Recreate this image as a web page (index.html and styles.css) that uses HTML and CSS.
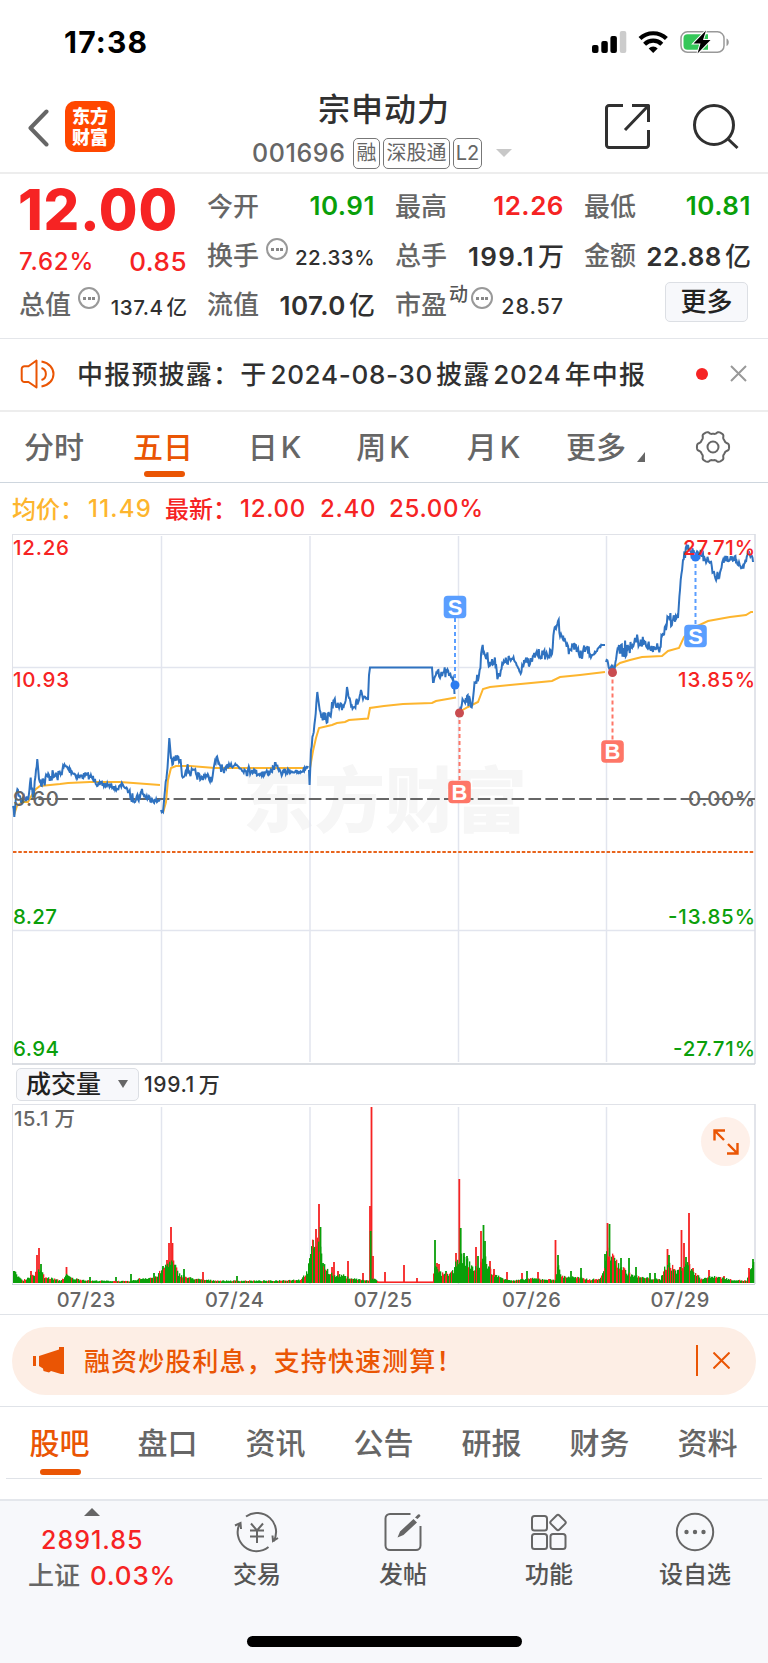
FILE: index.html
```html
<!DOCTYPE html>
<html lang="zh-CN">
<head>
  <meta charset="UTF-8">
  <title>宗申动力 001696</title>
  <meta name="viewport" content="width=device-width, initial-scale=1.0">
  <link rel="stylesheet" href="styles.css">
</head>
<body>
  <!-- STATUS BAR -->
  <div class="status">
    <span class="clock">17:38</span>
    <svg class="status-icons" width="140" height="26" viewBox="0 0 140 26">
      <rect x="0" y="14" width="6.5" height="8" rx="2"/>
      <rect x="9.3" y="10" width="6.5" height="12" rx="2"/>
      <rect x="18.4" y="5" width="6.5" height="17" rx="2"/>
      <rect x="27.8" y="0" width="6.5" height="22" rx="2" fill="#ccc"/>
      <g fill="none" stroke="#000" stroke-width="4.2">
        <path d="M48 7.6a19 19 0 0 1 26.4 0"/>
        <path d="M52.6 13.2a12.3 12.3 0 0 1 17.2 0"/>
      </g>
      <path d="M61.2 22l-4.5-4.6a6.5 6.5 0 0 1 9 0z"/>
      <rect x="89" y=".8" width="43" height="20.5" rx="6.5" fill="#fff" stroke="#999" stroke-width="1.5"/>
      <path d="M95.5 3.3h20.5v15.5H95.5a4 4 0 0 1-4-4V7.3a4 4 0 0 1 4-4z" fill="#34c759"/>
      <path d="M134.5 7.5c3 1 3 6.5 0 7.5z" fill="#999"/>
      <path d="M114-.5L101.5 12.5h7l-3 10L118.5 9h-7.5z" stroke="#fff" stroke-width="2" paint-order="stroke"/>
    </svg>
  </div>

  <!-- HEADER -->
  <header class="header">
    <svg class="back" width="22" height="38" viewBox="0 0 22 38"><path d="M18.5 2.5L2.5 19l16 16.5"/></svg>
    <div class="logo"><span>东方</span><span>财富</span></div>
    <div class="title">
      <h1>宗申动力</h1>
      <div class="code">
        <span class="num">001696</span>
        <span class="badge b1">融</span>
        <span class="badge b2">深股通</span>
        <span class="badge b3">L2</span>
        <i class="caret"></i>
      </div>
    </div>
    <svg class="share" width="48" height="48" viewBox="0 0 48 48"><path d="M19 2.5H5a2.5 2.5 0 0 0-2.5 2.5v37A2.5 2.5 0 0 0 5 44.5h37a2.5 2.5 0 0 0 2.5-2.5V27M28 2.5h16.5V19M44 3L21 27"/></svg>
    <svg class="search" width="48" height="48" viewBox="0 0 48 48"><circle cx="22" cy="22" r="19.5"/><path d="M35.5 35.5L45.5 45"/></svg>
  </header>

  <!-- QUOTE -->
  <section class="quote">
    <div class="cell price red">12.00</div>
    <div class="cell"><label>今开</label><b class="green">10.91</b></div>
    <div class="cell"><label>最高</label><b class="red">12.26</b></div>
    <div class="cell"><label>最低</label><b class="green">10.81</b></div>

    <div class="cell change red"><span class="pct">7.62%</span><span class="diff">0.85</span></div>
    <div class="cell"><label>换手</label><i class="more-dot"></i><b class="small">22.33%</b></div>
    <div class="cell"><label>总手</label><b class="wide">199.1<em>万</em></b></div>
    <div class="cell"><label>金额</label><b>22.88<em>亿</em></b></div>

    <div class="cell"><label>总值</label><i class="more-dot"></i><b class="small">137.4<em>亿</em></b></div>
    <div class="cell"><label>流值</label><b>107.0<em>亿</em></b></div>
    <div class="cell"><label>市盈</label><sup>动</sup><i class="more-dot tight"></i><b class="small pe">28.57</b></div>
    <div class="cell"><button class="more">更多</button></div>
  </section>

  <!-- NOTICE -->
  <div class="notice">
    <svg width="36" height="32" viewBox="0 0 36 32"><path d="M16.5 2.5v27L8.5 24h-4A2.8 2.8 0 0 1 1.7 21V11a2.8 2.8 0 0 1 2.8-2.8h4zM21.5 10a6.3 6.3 0 0 1 0 12M21.5 3.5c16 3 16 22 0 25"/></svg>
    <span class="notice-text">中报预披露：于<span class="n1">2024-08-30</span>披露<span class="n2">2024</span>年中报</span>
    <i class="dot"></i>
    <svg class="close" width="17" height="17" viewBox="0 0 17 17"><path d="M1 1l15 15M16 1L1 16"/></svg>
  </div>

  <!-- PERIOD TABS -->
  <nav class="periods">
    <a>分时</a>
    <a class="active">五日</a>
    <a>日<span>K</span></a>
    <a>周<span>K</span></a>
    <a>月<span>K</span></a>
    <a class="last">更多<i></i></a>
    <svg width="36" height="36" viewBox="-18 -18 36 36"><path id="gear"/><circle r="5.5"/></svg>
  </nav>

  <!-- CHART -->
  <div class="legend">
    <span class="avg cn">均价：</span><span class="avg l1">11.49</span>
    <span class="red cn">最新：</span><span class="red l3">12.00</span><span class="red l4">2.40</span><span class="red l5">25.00%</span>
  </div>
  <svg class="chart" id="priceChart" width="768" height="532" viewBox="0 533 768 532"></svg>

  <div class="vol-head">
    <button>成交量<i></i></button>
    <span>199.1<em>万</em></span>
  </div>
  <div class="volume">
    <svg class="chart" id="volumeChart" width="768" height="182" viewBox="0 1103 768 182"></svg>
    <div class="expand">
      <svg width="26" height="26" viewBox="0 0 26 26"><path d="M1.5 11.5V1.5H12M2 2l9 9M24.5 14v10.5H14M24 24l-9-9"/></svg>
    </div>
  </div>
  <div class="dates">
    <span>07/23</span><span>07/24</span><span>07/25</span><span>07/26</span><span>07/29</span>
  </div>

  <!-- BANNER -->
  <div class="banner-wrap">
    <div class="banner">
      <svg width="32" height="28" viewBox="0 0 32 28"><path d="M0 9h3v10H0zM6 9l20-6.5V0h5v27h-3l-10-3-2 1.5-5.5-1.5-.5-2.5L6 19z"/></svg>
      <span>融资炒股利息，支持快速测算！</span>
      <i></i>
      <svg class="close" width="17" height="17" viewBox="0 0 17 17"><path d="M.5 .5l16 16M16.5 .5l-16 16"/></svg>
    </div>
  </div>

  <!-- SECTIONS -->
  <nav class="sections">
    <a class="active">股吧</a><a>盘口</a><a>资讯</a><a>公告</a><a>研报</a><a>财务</a><a>资料</a>
  </nav>

  <!-- BOTTOM BAR -->
  <footer class="bottom">
    <div class="index">
      <i></i>
      <div class="value red">2891.85</div>
      <div class="name">上证 <span class="red">0.03%</span></div>
    </div>
    <a>
      <svg width="46" height="42" viewBox="-23 -21 46 42">
        <path d="M-11-15.5A19 19 0 0 1 16.5 9.5M11.5 15A19 19 0 0 1-17-9M-22-6.5l5.5-2.5.5 6M21 6l-5 3-.5-5.5"/>
        <path d="M-6-8.5l6 7 6-7M0-1.5V11M-7-1.5H7M-7 4.5H7"/>
      </svg>
      交易
    </a>
    <a>
      <svg width="42" height="42" viewBox="-21 -21 42 42">
        <path d="M7.5-18H-13a4.5 4.5 0 0 0-4.5 4.5v27a4.5 4.5 0 0 0 4.5 4.5h26a4.5 4.5 0 0 0 4.5-4.5V-6"/>
        <path class="solid" d="M-5.5 5.5l2.5-6L10.5-13l3.5 3.5L.5 3zM12-14.5l3-3q2-1 2.5 1.5l-3 3z"/>
      </svg>
      发帖
    </a>
    <a>
      <svg width="42" height="42" viewBox="-21 -21 42 42">
        <rect x="-17" y="-16" width="15" height="14.5" rx="2.5"/>
        <rect x="-17" y="2" width="15" height="15" rx="2.5"/>
        <rect x="1.5" y="2" width="15" height="15" rx="2.5"/>
        <rect x="3" y="-15.5" width="12" height="12" rx="2" transform="rotate(45 9 -9.5)"/>
      </svg>
      功能
    </a>
    <a>
      <svg width="42" height="42" viewBox="-21 -21 42 42">
        <circle r="18.2"/>
        <g class="solid"><circle cx="-8.5" r="2.2"/><circle r="2.2"/><circle cx="8.5" r="2.2"/></g>
      </svg>
      设自选
    </a>
    <div class="home-bar"></div>
  </footer>

  <script src="chart.js"></script>
</body>
</html>
```
FILE: styles.css
```css
* {
  box-sizing: border-box;
}
body {
  margin: 0;
  width: 768px;
  height: 1663px;
  overflow: hidden;
  background: #fff;
  color: #303030;
  font-family: Inter, "Noto Sans CJK SC", sans-serif;
  font-weight: 500;
  display: flex;
  flex-direction: column;
}
body > * {
  flex-shrink: 0;
}
svg {
  display: block;
  flex-shrink: 0;
}
i, em {
  font-style: normal;
}
.red {
  color: #f62323;
}
.green {
  color: #0a9f0a;
}

/* status bar */
.status {
  height: 84px;
  padding: 0 36px 0 64px;
  display: flex;
  align-items: center;
  justify-content: space-between;
}
.clock {
  font-size: 30px;
  font-weight: 700;
  letter-spacing: 1.2px;
  color: #000;
}
.status-icons {
  width: 140px;
  margin-top: 4px;
  overflow: visible;
}

/* header */
.header {
  height: 90px;
  border-bottom: 2px solid #ededed;
  display: flex;
  align-items: flex-start;
}
.header svg {
  fill: none;
  stroke: #303030;
  stroke-width: 3;
  stroke-linejoin: round;
}
.header .back {
  margin: 25px 0 0 28px;
  stroke: #666;
  stroke-width: 4;
  stroke-linecap: round;
}
.logo {
  width: 50px;
  height: 51px;
  margin: 17px 0 0 15px;
  padding-top: 5px;
  border-radius: 10px;
  background: #ff4700;
  color: #fff;
  font-size: 18px;
  font-weight: 900;
  line-height: 21px;
  text-align: center;
}
.logo span {
  display: block;
}
.title {
  width: 262px;
  margin-left: 137px;
}
.title h1 {
  margin: 1px 0 0 66px;
  font-size: 32px;
  font-weight: 500;
  line-height: 50px;
  letter-spacing: 1px;
}
.code {
  height: 34px;
  margin-top: 1px;
  display: flex;
  align-items: center;
  color: #666;
}
.code .num {
  width: 101px;
  font-size: 25px;
  letter-spacing: .6px;
}
.badge {
  height: 31px;
  border: 1.5px solid #777;
  border-radius: 5px;
  font-size: 20px;
  font-weight: 400;
  line-height: 28px;
  text-align: center;
}
.b1 { width: 27px; }
.b2 { width: 67px; margin: 0 3px; }
.b3 { width: 29px; }
.caret {
  margin-left: 14px;
  border: 8px solid transparent;
  border-top-color: #c8c8c8;
  border-bottom: 0;
}
.share {
  margin: 19px 0 0 90px;
}
.search {
  margin: 19px 0 0 40px;
}

/* quote */
.quote {
  height: 165px;
  padding: 7px 15px 0 19px;
  border-bottom: 1.5px solid #e4e6ea;
  display: grid;
  grid-template-columns: 168px 168px 169px 167px;
  grid-template-rows: 49px 49px 49px;
  column-gap: 20px;
}
.cell {
  display: flex;
  align-items: center;
}
.cell label {
  margin-top: -2px;
  font-size: 26px;
  font-weight: 500;
  color: #666;
}
.cell b {
  margin: -1px 0 0 auto;
  font-size: 26px;
  font-weight: 600;
  letter-spacing: .5px;
  white-space: nowrap;
}
.cell b.wide {
  letter-spacing: 1.3px;
}
.cell em {
  margin-left: 3px;
  font-weight: 500;
  letter-spacing: 0;
}
.cell .small {
  margin-top: 5px;
  font-size: 20.5px;
  font-weight: 500;
  letter-spacing: .5px;
}
.cell .pe {
  font-size: 21.5px;
  letter-spacing: .9px;
}
.price {
  padding-top: 8px;
  margin-left: -1px;
  font-size: 56px;
  font-weight: 800;
  letter-spacing: .8px;
}
.change {
  justify-content: space-between;
  padding-top: 14px;
}
.pct {
  font-size: 24px;
  letter-spacing: .8px;
}
.diff {
  font-size: 26px;
  letter-spacing: .5px;
}
.more-dot {
  width: 22px;
  height: 22px;
  margin: -11px 0 0 7px;
  border: 2px solid #999;
  border-radius: 50%;
  background:
    radial-gradient(circle, #888 1.6px, transparent 2px) center / 5px 5px no-repeat,
    radial-gradient(circle, #888 1.6px, transparent 2px) 2px center / 5px 5px no-repeat,
    radial-gradient(circle, #888 1.6px, transparent 2px) 11px center / 5px 5px no-repeat;
}
.more-dot.tight {
  margin-left: 3px;
}
.cell sup {
  margin: -17px 0 0 2px;
  font-size: 19px;
  line-height: 20px;
  color: #555;
}
.more {
  width: 83px;
  height: 40px;
  margin: -3px 3px 0 auto;
  padding: 0;
  border: 1.5px solid #dcdfe4;
  border-radius: 5px;
  background: #f7f8fb;
  color: #222;
  font: inherit;
  font-size: 26px;
  line-height: 38px;
}

/* notice */
.notice {
  height: 73px;
  padding-left: 20px;
  border-bottom: 2px solid #ededed;
  display: flex;
  align-items: center;
}
.notice svg {
  margin-top: -2px;
  fill: none;
  stroke: #ea5504;
  stroke-width: 2;
  stroke-linejoin: round;
}
.notice-text {
  width: 600px;
  margin: -5px 0 0 21px;
  font-size: 26px;
  letter-spacing: 1.2px;
  white-space: nowrap;
}
.n1, .n2 {
  margin: 0 3px;
  letter-spacing: .7px;
}
.dot {
  width: 12px;
  height: 12px;
  margin: -2px 0 0 19px;
  border-radius: 50%;
  background: #f62323;
}
.notice .close {
  margin-left: 22px;
  stroke: #999;
}

/* period tabs */
.periods {
  height: 71px;
  border-bottom: 1.5px solid #ced6de;
  display: grid;
  grid-template-columns: 108px 110px 113px 104px 117px 143px 36px;
  align-items: center;
}
.periods a {
  position: relative;
  font-size: 30px;
  line-height: 68px;
  color: #666;
  text-align: center;
  white-space: nowrap;
}
.periods a span {
  margin-left: 3px;
}
.periods a.last {
  padding-left: 14px;
  text-align: left;
}
.periods .last i {
  display: inline-block;
  margin-left: 11px;
  border-left: 8px solid transparent;
  border-bottom: 10px solid #666;
  vertical-align: -4px;
}
.periods svg {
  fill: none;
  stroke: #666;
  stroke-width: 2;
}
.periods a.active, .sections a.active {
  color: #ea5504;
}
.active::after {
  content: "";
  position: absolute;
  left: 50%;
  bottom: 4px;
  width: 41px;
  height: 6px;
  margin-left: -19px;
  border-radius: 3px;
  background: #ea5504;
}

/* chart */
.legend {
  height: 50px;
  padding: 1px 0 0 12px;
  display: flex;
  align-items: center;
  font-size: 24px;
  letter-spacing: .7px;
}
.legend .cn {
  margin-top: -3px;
  letter-spacing: 0;
}
.avg {
  color: #fdb52e;
}
.legend .l1 { width: 77px; margin-left: 4px; letter-spacing: 1.2px; }
.legend .l3 { width: 80px; margin-left: 3px; }
.legend .l4 { width: 69px; }
.chart text {
  font-family: Inter, "Noto Sans CJK SC", sans-serif;
  font-weight: 500;
}
.chart .mark {
  font-family: "Liberation Sans", sans-serif;
  font-weight: 700;
}
.vol-head {
  height: 38px;
  padding-left: 16px;
  display: flex;
  align-items: center;
  font-size: 21px;
}
.vol-head button {
  width: 123px;
  height: 33px;
  padding: 0 0 0 9px;
  margin-right: 5px;
  border: 1.5px solid #dcdfe4;
  border-radius: 5px;
  background: #f7f8fb;
  color: #222;
  font: inherit;
  font-size: 25px;
  line-height: 29px;
  display: flex;
  align-items: center;
}
.vol-head button i {
  margin-left: 17px;
  border: 5px solid transparent;
  border-top: 8px solid #666;
  border-bottom: 0;
}
.vol-head span {
  margin-top: -2px;
  letter-spacing: .6px;
}
.vol-head em {
  margin-left: 4px;
}
.volume {
  position: relative;
}
.expand {
  position: absolute;
  left: 701px;
  top: 14px;
  width: 49px;
  height: 49px;
  padding: 12px;
  border-radius: 50%;
  background: #fef0e9;
}
.expand svg {
  fill: none;
  stroke: #ea5504;
  stroke-width: 2.4;
}
.dates {
  height: 30px;
  padding: 0 12px;
  border-bottom: 1.5px solid #e0e3e8;
  display: grid;
  grid-template-columns: repeat(5, 148.5px);
  font-size: 20px;
  letter-spacing: .6px;
  line-height: 31px;
  color: #666;
  text-align: center;
}

/* banner */
.banner-wrap {
  height: 92px;
  padding: 12px 12px 0;
  border-bottom: 1.5px solid #e0e3e8;
}
.banner {
  height: 68px;
  padding-left: 21px;
  border-radius: 34px;
  background: #fdeee5;
  color: #ea5504;
  display: flex;
  align-items: center;
}
.banner svg {
  fill: #ea5504;
}
.banner span {
  width: 591px;
  margin: -4px 0 0 19px;
  font-size: 26px;
  letter-spacing: 1.1px;
}
.banner i {
  width: 2px;
  height: 31px;
  margin: -1px 15px 0 21px;
  background: #ea5504;
}
.banner .close {
  margin-top: -1px;
  fill: none;
  stroke: #ea5504;
  stroke-width: 2;
}

/* section tabs */
.sections {
  height: 72px;
  margin: 0 6px;
  border-bottom: 1.5px solid #e0e3e8;
  display: grid;
  grid-template-columns: repeat(7, 108px);
}
.sections a {
  position: relative;
  font-size: 30px;
  line-height: 72px;
  color: #666;
  text-align: center;
  text-indent: -1px;
}
.sections .active::after {
  bottom: 4px;
  margin-left: -20px;
}

/* bottom bar */
.bottom {
  position: relative;
  height: 164px;
  margin-top: 20px;
  border-top: 2px solid #e4e7ec;
  background: #f7f8fb;
  display: flex;
}
.index {
  width: 184px;
  padding-top: 7px;
}
.index i {
  display: block;
  width: 16px;
  margin-left: 84px;
  border: 8px solid transparent;
  border-top: 0;
  border-bottom-color: #666;
}
.value {
  padding: 6px 0 0 41px;
  font-size: 25px;
  letter-spacing: 1px;
  line-height: 36px;
}
.name {
  padding-left: 28px;
  font-size: 26px;
  line-height: 36px;
  color: #666;
}
.name span {
  margin-left: 3px;
  letter-spacing: .8px;
}
.bottom a {
  width: 146px;
  padding-top: 10px;
  display: flex;
  flex-direction: column;
  align-items: center;
  font-size: 24px;
  line-height: 43px;
  color: #555;
}
.bottom svg {
  fill: none;
  stroke: #666;
  stroke-width: 2;
}
.bottom .solid {
  fill: #666;
  stroke: none;
}
.home-bar {
  position: absolute;
  left: 247px;
  bottom: 16px;
  width: 275px;
  height: 11px;
  border-radius: 6px;
  background: #000;
}
```
FILE: chart.js
```js
// price anchors: [x, y, jitter]
var days = [
  [[13,806,2],[14.3,817,0],[16,797,3],[18,790,4],[21,802,3],[24,796,3],[28,800,3],[30,783,5],[34,793,3],[36,770,3],[37.3,759,0],[39,779,4],[44,782,4],[49,775,4],[57,777,3],[61,772,3],[65,766,2],[72,772,2],[79,777,2],[86,775,2],[95,779,3],[99,785,2],[108,785,1],[117,789,2],[123,785,1],[129,792,3],[131,798,3],[140,797,2],[142,789,2],[144,796,2],[152,799,2],[157,802,1],[160,799,0]],
  [[161,810,1],[163,812,0],[165,790,2],[167.5,768,3],[169.3,738,0],[171,758,3],[173,764,4],[177,757,3],[181,764,3],[182,776,3],[187,768,3],[191,773,3],[196,774,3],[201,779,2],[205,775,2],[212,780,1],[215,761,4],[219,763,3],[224,773,2],[229,764,2],[236,765,2],[246,771,3],[252,770,2],[259,774,2],[270,772,2],[276,765,1],[281,773,2],[290,771,1],[300,773,1],[306,768,1],[308,766,0]],
  [[309,770,1],[309.6,785,0],[311,750,2],[313,735,2],[315,720,3],[317.3,692,0],[319,705,3],[322,715,4],[326,719,3],[330,716,4],[332,702,4],[337,707,4],[342,710,3],[345,703,3],[347,687,2],[349,698,3],[354,707,3],[359,700,2],[361,690,2],[363,699,2],[368,700,1],[369,675,0],[370,667.5,0],[432,667.5,0],[433,682,3],[437,674,4],[440,678,3],[444,672,4],[449,675,2],[453,678,0],[454,685,0],[454.5,694,0]],
  [[458,717,0],[459,712,2],[463,700,4],[467,696,4],[471,707,4],[475,683,4],[479,675,4],[482,648,3],[486,656,4],[490,662,4],[496,664,4],[498,677,3],[503,664,3],[510,659,3],[516,663,2],[520,672,3],[524,660,3],[530,664,3],[536,653,3],[543,655,3],[552,654,2],[554,631,3],[558,621,4],[561,634,2],[566,643,4],[570,650,3],[576,645,3],[580,658,4],[586,648,3],[592,655,1],[597,651,1],[602,645,0],[605,645,0]],
  [[606,662,3],[608,663,5],[611,667,6],[614,673,3],[617,652,5],[619,645,6],[623,648,7],[627,645,5],[632,648,3],[635,638,4],[640,645,3],[644,640,3],[648,645,3],[653,652,4],[660,648,3],[662,636,4],[666,630,5],[669,617,5],[673,620,4],[678,618,2],[680,590,2],[683,560,3],[688,545,4],[691,552,4],[695,557,3],[700,554,4],[704,556,3],[709,562,4],[714,572,5],[718,579,2],[723,560,3],[728,561,4],[734,560,3],[739,562,2],[742,568,2],[746,562,2],[749,552,3],[753,562,0]]
];
var averages = [
  "14,815 17,806 22,802 28,802 33,793 36,789 40,786 50,785 60,784 68,783 90,782 120,782 160,785",
  "163,813 166,802 168,780 171,768 176,766 190,766 215,768 307,768",
  "310,768 313,751 316,738 319,728 332,725 337,723 345,722 349,720 368,718.5 370,708 384,706 403,704 432,703 436,701 456,697.5",
  "459,712 468,707 478,702 483,689 490,687 510,685 552,681 560,677 580,675 605,672",
  "612,669 620,663 630,660 642,657 662,656 668,651 679,648 684,637 695,627 708,621 730,617 746,615 751,612 753,612"
];

// volume envelope: [x, height], peaks: [x, height, colour]
var volume = [
  [13,10],[17,7],[22,2],[26,4],[32,7],[36,9],[40,12],[44,5],[52,4],[60,2],[66,7],[72,4],[90,2],[100,2],[130,1.5],[140,4],[155,5],[162,12],[168,18],[173,18],[178,8],[186,5],[200,3],[220,2],[240,2],[270,2],[300,3],[307,10],[312,34],[318,38],[321,22],[326,12],[334,6],[342,7],[346,5],[352,4],[368,2],[374,4],[378,1],[400,1],[432,1],[434,14],[441,8],[448,8],[453,10],[457,22],[462,22],[468,18],[474,12],[479,15],[483,25],[487,16],[492,8],[500,5],[512,2],[530,4],[550,3],[555,3],[557,16],[561,6],[575,5],[590,3],[600,4],[604,14],[607,30],[612,22],[620,15],[628,8],[640,5],[660,3],[663,12],[668,17],[676,10],[681,14],[686,18],[692,11],[700,4],[715,6],[730,3],[746,2],[749,9],[753,16]
];
var peaks = [
  [37,28,"r"],[39,35,"r"],[41,19,"g"],[31,12,"r"],[66.5,16,"r"],[90,6,"g"],[116,6,"g"],[131,9,"g"],[154,10,"g"],[163,17,"g"],[167,23,"r"],[169,40,"r"],[171,56,"r"],[172.5,40,"r"],[175,18,"g"],[184,14,"g"],[203,11,"r"],[237,7,"g"],
  [309,18,"r"],[311,28,"g"],[313,43,"g"],[316,54,"r"],[319,79,"r"],[320.5,56,"g"],[323,20,"g"],[332,16,"r"],[334,21,"r"],[338,12,"r"],[348,22,"r"],[363,10,"r"],[370,77,"r"],[371.5,176,"r"],[373,27,"r"],[370.7,52,"g"],
  [385,11,"r"],[404,18,"r"],[417,5,"r"],[435,43,"g"],[437,20,"r"],[439,19,"r"],[446,12,"g"],[456,30,"r"],[459.3,104,"r"],[460.7,55,"g"],[464,30,"g"],[467,27,"g"],[476,36,"r"],[478,27,"g"],[481,52,"r"],[483.5,58,"g"],[485,42,"g"],[490,22,"r"],[494,14,"r"],[507,11,"r"],[522,10,"r"],[527,12,"g"],[538,11,"r"],[555.5,43,"r"],[558,28,"g"],[571,12,"g"],[581,15,"g"],[605,29,"g"],[607.5,60,"r"],[609.5,59,"g"],[612,25,"r"],[616,22,"g"],[621,25,"g"],[629,25,"g"],[636,16,"g"],[650,10,"g"],[655,10,"g"],[667.5,34,"r"],[669,28,"g"],[681.5,53,"r"],[684,40,"r"],[686,26,"g"],[689,70,"r"],[693,15,"r"],[709,13,"r"],[724,7,"r"],[749,15,"r"],[753,24,"g"]
];

var seed = 7;
function rnd() {
  seed = (seed * 16807) % 2147483647;
  return seed / 2147483647;
}

function line(x1, y1, x2, y2, color, extra) {
  return '<line x1="' + x1 + '" y1="' + y1 + '" x2="' + x2 + '" y2="' + y2 + '" stroke="' + color + '" ' + (extra || '') + '/>';
}
function label(x, y, text, color, len, end) {
  return '<text x="' + x + '" y="' + y + '" fill="' + color + '" font-size="20.5" textLength="' + len + '"' + (end ? ' text-anchor="end"' : '') + '>' + text + '</text>';
}
function pricePoints(anchors) {
  var out = [];
  for (var i = 0; i < anchors.length - 1; i++) {
    var a = anchors[i], b = anchors[i + 1];
    out.push(a[0] + ',' + a[1]);
    for (var x = a[0] + 0.7; x < b[0] - 0.4; x += 0.7) {
      var t = (x - a[0]) / (b[0] - a[0]);
      var y = a[1] + (b[1] - a[1]) * t + (rnd() * 2 - 1) * 1.6 * Math.min(a[2], b[2] + 2);
      out.push(x.toFixed(1) + ',' + y.toFixed(1));
    }
  }
  var last = anchors[anchors.length - 1];
  out.push(last[0] + ',' + last[1]);
  return out.join(' ');
}
function mark(x, dotY, boxY, letter) {
  var buy = letter === 'B';
  var c = buy ? '#fe7667' : '#5a9eff';
  return line(x, dotY, x, boxY, c, 'stroke-width="2" stroke-dasharray="4 3"') +
    '<circle cx="' + x + '" cy="' + dotY + '" r="4.5" fill="' + (buy ? '#c94c50' : '#2b7cf0') + '"/>' +
    '<rect x="' + (x - 11.3) + '" y="' + (boxY - 11.3) + '" width="22.6" height="22.6" rx="4" fill="' + c + '"/>' +
    '<text class="mark" x="' + x + '" y="' + (boxY + 7.8) + '" fill="#fff" font-size="22" text-anchor="middle">' + letter + '</text>';
}

function drawPrice() {
  var s = '<text x="243" y="826" font-size="71" fill="#f6f6f6" style="font-weight:900" textLength="284">东方财富</text>';
  [161.5, 310, 458.5, 606.5].forEach(function (x) {
    s += line(x, 536, x, 1062, '#e2e5ee', 'stroke-width="1.5"');
  });
  s += line(12, 667.5, 755, 667.5, '#e2e5ee', 'stroke-width="1.3"');
  s += line(12, 930.5, 755, 930.5, '#e2e5ee', 'stroke-width="1.5"');
  s += line(12, 534.5, 755, 534.5, '#e0e2e8') + line(12.5, 534, 12.5, 1064, '#e0e2e8');
  s += line(755, 534, 755, 1064, '#d8dbe3', 'stroke-width="1.5"') + line(12, 1064, 755, 1064, '#cfd3da', 'stroke-width="1.5"');
  s += line(21.5, 799, 755, 799, '#666', 'stroke-width="2" stroke-dasharray="12.6 4.3"');
  s += line(13, 852, 755, 852, '#e8641c', 'stroke-width="2" stroke-dasharray="3.5 1.8"');
  averages.forEach(function (p) {
    s += '<polyline points="' + p + '" fill="none" stroke="#fdb52e" stroke-width="2"/>';
  });
  days.forEach(function (d) {
    s += '<polyline points="' + pricePoints(d) + '" fill="none" stroke="#2f72c0" stroke-width="2"/>';
  });
  s += mark(455, 685, 607, 'S') + mark(459.5, 713, 792, 'B') + mark(612.5, 672.5, 751.5, 'B') + mark(695.5, 557, 636, 'S');
  s += label(13, 554.5, '12.26', '#f62323', 56) + label(13, 687, '10.93', '#f62323', 56) + label(13, 806, '9.60', '#666', 46);
  s += label(13, 924, '8.27', '#0a9f0a', 44) + label(13, 1056, '6.94', '#0a9f0a', 46);
  s += label(755, 554.5, '27.71%', '#f62323', 72, true) + label(755, 687, '13.85%', '#f62323', 77, true) + label(755, 806, '0.00%', '#666', 67, true);
  s += label(755, 924, '-13.85%', '#0a9f0a', 87, true) + label(755, 1056, '-27.71%', '#0a9f0a', 82, true);
  document.getElementById('priceChart').innerHTML = s;
}

function drawVolume() {
  var s = '';
  [161.5, 310, 458.5, 606.5].forEach(function (x) {
    s += line(x, 1107, x, 1284, '#e2e5ee', 'stroke-width="1.5"');
  });
  s += line(12, 1104.5, 755, 1104.5, '#e0e2e8') + line(12.5, 1104, 12.5, 1284, '#e0e2e8');
  s += line(755, 1104, 755, 1284, '#d8dbe3', 'stroke-width="1.5"') + line(12, 1284.5, 755, 1284.5, '#cfd3da');
  peaks.forEach(function (p) {
    s += '<rect x="' + (p[0] - 0.9) + '" y="' + (1283 - p[1]) + '" width="1.8" height="' + p[1] + '" fill="' + (p[2] === 'r' ? '#f62323' : '#0a9f0a') + '"/>';
  });
  var k = 0;
  for (var x = 13; x < 754; x++) {
    while (k < volume.length - 2 && volume[k + 1][0] <= x) k++;
    var a = volume[k], b = volume[k + 1];
    var h = a[1] + (b[1] - a[1]) * (x - a[0]) / (b[0] - a[0]);
    h = Math.max(1.5, h * (0.85 + rnd() * 0.5));
    var quiet = x > 376 && x < 433;
    var c = quiet || rnd() < 0.28 ? '#f62323' : '#0a9f0a';
    s += '<rect x="' + x + '" y="' + (1283 - h).toFixed(1) + '" width="1.3" height="' + h.toFixed(1) + '" fill="' + c + '"/>';
  }
  s += label(14, 1126, '15.1 万', '#666', 61);
  document.getElementById('volumeChart').innerHTML = s;
}

// settings gear outline with six rounded teeth
function drawGear() {
  var d = '';
  for (var i = 0; i < 120; i++) {
    var t = i / 120 * Math.PI * 2;
    var r = 14.6 + 1.5 * Math.tanh(2.2 * Math.cos(6 * t));
    d += (i ? 'L' : 'M') + (r * Math.cos(t)).toFixed(2) + ' ' + (r * Math.sin(t)).toFixed(2);
  }
  document.getElementById('gear').setAttribute('d', d + 'z');
}

drawPrice();
drawVolume();
drawGear();
```
